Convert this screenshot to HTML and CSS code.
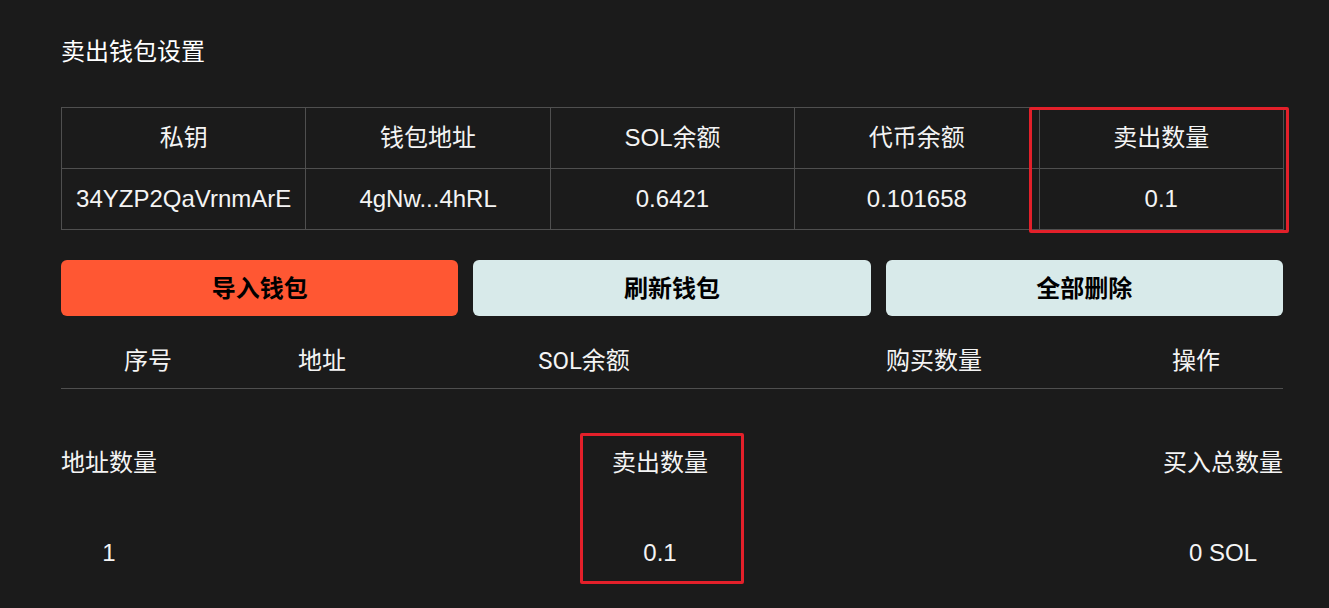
FILE: index.html
```html
<!DOCTYPE html>
<html lang="zh">
<head>
<meta charset="utf-8">
<title>卖出钱包设置</title>
<link rel="stylesheet" href="styles.css">
</head>
<body>
<div class="page">
  <h2 class="title">卖出钱包设置</h2>

  <div class="wallet-wrap">
    <table class="wallet-table">
      <tr>
        <th>私钥</th><th>钱包地址</th><th>SOL余额</th><th>代币余额</th><th>卖出数量</th>
      </tr>
      <tr>
        <td>34YZP2QaVrnmArE</td><td>4gNw...4hRL</td><td>0.6421</td><td>0.101658</td><td>0.1</td>
      </tr>
    </table>
    <div class="mark mark-table"></div>
  </div>

  <div class="actions">
    <button class="btn btn-primary">导入钱包</button>
    <button class="btn btn-light">刷新钱包</button>
    <button class="btn btn-light">全部删除</button>
  </div>

  <div class="list-head">
    <span>序号</span><span>地址</span><span>SOL余额</span><span>购买数量</span><span>操作</span>
  </div>

  <div class="stats">
    <div class="stat">
      <div class="stat-label">地址数量</div>
      <div class="stat-value">1</div>
    </div>
    <div class="stat stat-marked">
      <div class="stat-label">卖出数量</div>
      <div class="stat-value">0.1</div>
      <div class="mark mark-stat"></div>
    </div>
    <div class="stat">
      <div class="stat-label">买入总数量</div>
      <div class="stat-value">0 SOL</div>
    </div>
  </div>
</div>
</body>
</html>
```

FILE: styles.css
```css
html, body {
  margin: 0;
  padding: 0;
  background: #1b1b1b;
  color: #ffffff;
  font-family: "Liberation Sans", "Noto Sans CJK SC", sans-serif;
  font-size: 24px;
}

.page {
  width: 1222px;
  margin-left: 61px;
  padding-top: 34px;
  padding-bottom: 37px;
}

.title {
  margin: 0;
  font-size: 24px;
  font-weight: 400;
  line-height: 36px;
  height: 36px;
}

.wallet-wrap {
  position: relative;
  margin-top: 37px;
}

.wallet-table {
  width: 1223px;
  border-collapse: collapse;
  table-layout: fixed;
}

.wallet-table th,
.wallet-table td {
  border: 1px solid #4f4f4f;
  height: 60px;
  padding: 0;
  text-align: center;
  font-size: 24px;
  font-weight: 400;
  line-height: 30px;
  color: #f4f4f4;
}

.mark {
  position: absolute;
  border: 3px solid #e3202a;
  border-radius: 2px;
  pointer-events: none;
}

.mark-table {
  top: 0;
  left: 968px;
  width: 254px;
  height: 120px;
}

.actions {
  display: flex;
  gap: 15px;
  margin-top: 30px;
}

.btn {
  flex: 1;
  height: 56px;
  padding: 0 0 3px;
  border: 0;
  border-radius: 6px;
  font-family: "Liberation Sans", "Noto Sans CJK SC", sans-serif;
  font-size: 24px;
  font-weight: 700;
  color: #000;
}

.btn-primary { background: #ff5733; }
.btn-light { background: #d8eaea; }

.list-head {
  display: grid;
  grid-template-columns: 174px 174px 350px 350px 174px;
  margin-top: 16px;
  height: 52px;
  padding-bottom: 4px;
  align-items: center;
  border-bottom: 1px solid #4f4f4f;
  font-family: Roboto, "Noto Sans CJK SC", sans-serif;
  font-size: 24px;
  color: #f4f4f4;
}

.list-head span {
  text-align: center;
}

.stats {
  display: flex;
  justify-content: space-between;
  margin-top: 56px;
}

.stat {
  display: flex;
  flex-direction: column;
  align-items: center;
  gap: 54px;
  line-height: 36px;
  color: #f4f4f4;
}

.stat-marked {
  position: relative;
}

.mark-stat {
  top: -12px;
  bottom: -13px;
  left: -32px;
  right: -36px;
}
```
